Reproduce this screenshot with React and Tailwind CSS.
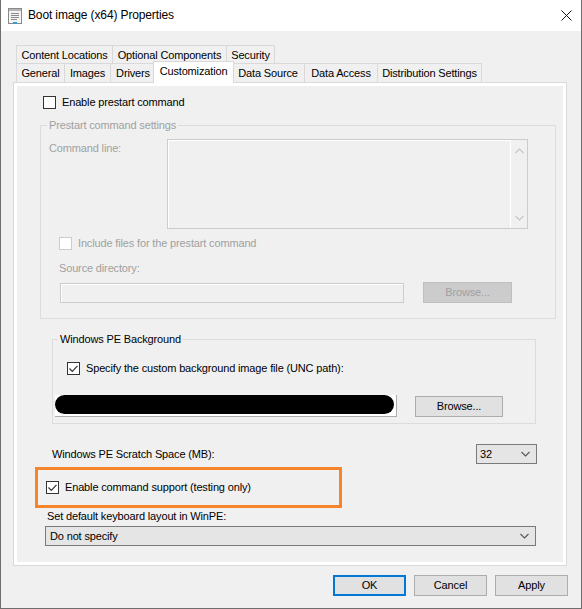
// Properties dialog for a boot image, Customization tab
const backTabs = [
  { label: 'Content Locations', w: 'w-[97px]' },
  { label: 'Optional Components', w: 'w-[115px]' },
  { label: 'Security', w: 'w-[49px]' },
]

const frontTabs = [
  { label: 'General', w: 'w-[49px]' },
  { label: 'Images', w: 'w-[47px]' },
  { label: 'Drivers', w: 'w-[46px]' },
  { label: 'Customization', w: 'w-[81px]', active: true },
  { label: 'Data Source', w: 'w-[74px]' },
  { label: 'Data Access', w: 'w-[74px]' },
  { label: 'Distribution Settings', w: 'w-[105px]' },
]

function DialogIcon() {
  return (
    <svg width="14" height="16" viewBox="0 0 14 16" className="shrink-0">
      <rect x="0.5" y="0.5" width="13" height="15" fill="#f4f4f4" stroke="#8a8a8a" />
      <rect x="1" y="1" width="12" height="2" fill="#b5b5b5" />
      <path d="M3 5.5h8M3 7.5h8M3 9.5h8M3 11.5h6" stroke="#8a8a8a" />
      <rect x="5" y="14" width="4" height="1.5" fill="#1ba1e2" />
    </svg>
  )
}

function Checkbox({ checked, disabled }) {
  return (
    <span
      className={`w-[13px] h-[13px] shrink-0 border flex items-center justify-center ${
        disabled ? 'border-[#cccccc] bg-white' : 'border-[#333333] bg-white'
      }`}
    >
      {checked && (
        <svg width="11" height="11" viewBox="0 0 11 11">
          <path d="M1.5 5.5l2.8 2.8L9.5 2.8" fill="none" stroke="#333333" strokeWidth="1.2" />
        </svg>
      )}
    </span>
  )
}

function Chevron({ up, color = '#555555' }) {
  return (
    <svg width="9" height="6" viewBox="0 0 9 6">
      <path d={up ? 'M0.5 5L4.5 1l4 4' : 'M0.5 1l4 4 4-4'} fill="none" stroke={color} strokeWidth="1.1" />
    </svg>
  )
}

function Button({ children, primary, disabled, className = '' }) {
  const tone = disabled
    ? 'bg-[#cccccc] border border-[#bfbfbf] text-[#a0a0a0]'
    : primary
      ? 'bg-[#e1e1e1] border-2 border-[#0078d7]'
      : 'bg-[#e1e1e1] border border-[#adadad]'
  return (
    <div className={`h-[21px] flex items-center justify-center shrink-0 ${tone} ${className}`}>
      {children}
    </div>
  )
}

export default function App() {
  return (
    <div className="w-[582px] h-[609px] bg-[#f0f0f0] border-l border-r border-b border-[#6e6e6e] text-black text-[11px] leading-[15px] tracking-[-0.15px] font-['Liberation_Sans',Arial,sans-serif] overflow-hidden">
      {/* Title bar */}
      <div className="h-[31px] bg-white flex items-center">
        <div className="ml-[7px]">
          <DialogIcon />
        </div>
        <span className="ml-[6px] text-[12px] tracking-[-0.13px]">Boot image (x64) Properties</span>
        <svg width="11" height="11" viewBox="0 0 11 11" className="ml-auto mr-[9px]">
          <path d="M0.5 0.5l10 10M10.5 0.5l-10 10" stroke="#111111" strokeWidth="1" />
        </svg>
      </div>

      {/* Tab strip */}
      <div className="ml-[15px] mt-[14px]">
        <div className="flex h-[18px]">
          {backTabs.map((t, i) => (
            <div
              key={t.label}
              className={`${t.w} ${i > 0 ? '-ml-px' : ''} h-full border-t border-l border-r border-[#d9d9d9] flex items-center justify-center pt-px`}
            >
              {t.label}
            </div>
          ))}
        </div>
        <div className="flex h-[19px] items-end">
          {frontTabs.map((t, i) =>
            t.active ? (
              <div
                key={t.label}
                className={`${t.w} -ml-[3px] h-[22px] -mb-px relative z-10 bg-white border-t border-l border-r border-[#d9d9d9] flex items-center justify-center pb-[2px]`}
              >
                {t.label}
              </div>
            ) : (
              <div
                key={t.label}
                className={`${t.w} ${i === 0 ? '' : frontTabs[i - 1].active ? '-ml-[3px]' : '-ml-px'} h-full border-t border-l border-r border-[#d9d9d9] flex items-center justify-center`}
              >
                {t.label}
              </div>
            )
          )}
        </div>
      </div>

      {/* Tab page */}
      <div className="ml-[12px] w-[554px] h-[484px] border border-[#d9d9d9] bg-white p-[3px]">
        <div className="h-full bg-[#f0f0f0] pt-[9px]">
          <div className="ml-[26px] h-[15px] flex items-center gap-[6px]">
            <Checkbox />
            <span>Enable prestart command</span>
          </div>

          <fieldset className="ml-[23px] mt-[8px] w-[516px] border border-[#dcdcdc] pb-[15px] text-[#a0a0a0]">
            <legend className="ml-[6px] px-[2px] leading-[15px]">Prestart command settings</legend>
            <div className="flex mt-[6px]">
              <span className="w-[126px] pl-[8px] mt-[2px] shrink-0">Command line:</span>
              <div className="w-[361px] h-[90px] border border-[#cccccc] flex">
                <div className="flex-1 border-t border-l border-white" />
                <div className="w-[17px] border-l border-white flex flex-col items-center justify-between pt-[8px] pb-[7px]">
                  <Chevron up color="#c4c4c4" />
                  <Chevron color="#c4c4c4" />
                </div>
              </div>
            </div>
            <div className="ml-[18px] mt-[7px] h-[15px] flex items-center gap-[6px]">
              <Checkbox disabled />
              <span>Include files for the prestart command</span>
            </div>
            <div className="ml-[18px] mt-[10px] h-[15px]">Source directory:</div>
            <div className="ml-[19px] mt-[6px] flex items-start">
              <div className="w-[344px] h-[20px] mt-px border border-[#cccccc]">
                <div className="h-full border-t border-l border-white" />
              </div>
              <Button disabled className="ml-[19px] w-[89px]">Browse...</Button>
            </div>
          </fieldset>

          <fieldset className="ml-[35px] mt-[13px] w-[484px] border border-[#dcdcdc] pb-[6px]">
            <legend className="ml-[5px] px-[2px] leading-[15px]">Windows PE Background</legend>
            <div className="ml-[14px] mt-[14px] h-[15px] flex items-center gap-[6px]">
              <Checkbox checked />
              <span>Specify the custom background image file (UNC path):</span>
            </div>
            <div className="ml-[2px] mt-[19px] flex items-start">
              <div className="w-[342px] h-[22px] bg-white border-r border-b border-[#adadad]">
                <div className="w-[339px] h-[19px] rounded-full bg-black" />
              </div>
              <Button className="ml-[18px] mt-px w-[88px]">Browse...</Button>
            </div>
          </fieldset>

          <div className="ml-[35px] mt-[20px] w-[485px] flex items-center justify-between">
            <span>Windows PE Scratch Space (MB):</span>
            <div className="w-[61px] h-[20px] border border-[#7a7a7a] bg-[#e5e5e5] flex items-center justify-between pl-[3px] pr-[6px]">
              <span>32</span>
              <Chevron />
            </div>
          </div>

          <div className="ml-[18px] mt-[3px] w-[307px] h-[41px] border-[3px] border-[#f5842c] flex items-center gap-[6px] pl-[8px]">
            <Checkbox checked />
            <span>Enable command support (testing only)</span>
          </div>

          <div className="ml-[30px] mt-px h-[15px]">Set default keyboard layout in WinPE:</div>
          <div className="ml-[28px] mt-[2px] w-[491px] h-[20px] border border-[#7a7a7a] bg-[#e5e5e5] flex items-center justify-between pl-[4px] pr-[6px]">
            <span>Do not specify</span>
            <Chevron />
          </div>
        </div>
      </div>

      {/* Dialog buttons */}
      <div className="mt-[9px] flex justify-end gap-[8px] pr-[13px]">
        <Button primary className="w-[73px]">OK</Button>
        <Button className="w-[73px]">Cancel</Button>
        <Button className="w-[73px]">Apply</Button>
      </div>
    </div>
  )
}
